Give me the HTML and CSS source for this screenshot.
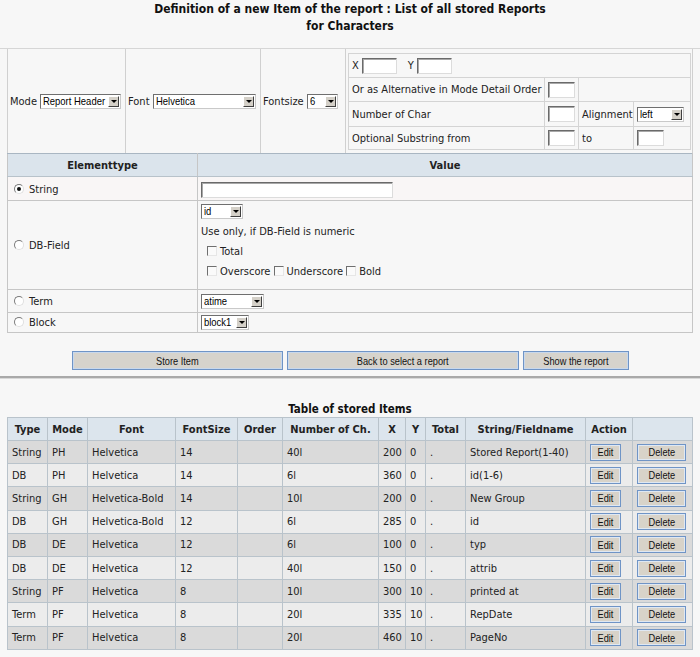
FILE: index.html
```html
<!DOCTYPE html>
<html>
<head>
<meta charset="utf-8">
<title>Definition of a new Item</title>
<link rel="stylesheet" href="styles.css">
</head>
<body>
<div class="title">Definition of a new Item of the report : List of all stored Reports<br>for Characters</div>

<table class="settings">
  <colgroup><col class="sc1"><col class="sc2"><col class="sc3"><col class="sc4"></colgroup>
  <tr>
    <td class="scell">Mode <span class="sel w-mode"><span class="st"><span class="nar">Report Header</span></span><span class="arr"></span></span></td>
    <td class="scell">Font <span class="sel w-font"><span class="st"><span class="nar">Helvetica</span></span><span class="arr"></span></span></td>
    <td class="scell">Fontsize <span class="sel w-size"><span class="st"><span class="nar">6</span></span><span class="arr"></span></span></td>
    <td class="nestcell">
      <table class="nest">
        <colgroup><col class="nc1"><col class="nc2"><col class="nc3"><col class="nc4"></colgroup>
        <tr class="nr1"><td colspan="4"><span class="lbl">X</span><span class="inp w-xy"></span><span class="lbl lbl-y">Y</span><span class="inp w-xy"></span></td></tr>
        <tr class="nr2"><td>Or as Alternative in Mode Detail Order</td><td><span class="inp w-small"></span></td><td colspan="2"></td></tr>
        <tr class="nr3"><td>Number of Char</td><td><span class="inp w-small"></span></td><td>Alignment</td><td><span class="sel w-align"><span class="st"><span class="nar">left</span></span><span class="arr"></span></span></td></tr>
        <tr class="nr4"><td>Optional Substring from</td><td><span class="inp w-small"></span></td><td>to</td><td><span class="inp w-small"></span></td></tr>
      </table>
    </td>
  </tr>
</table>

<table class="etable">
  <colgroup><col class="ec1"><col class="ec2"></colgroup>
  <tr class="ehead"><th>Elementtype</th><th>Value</th></tr>
  <tr class="er-string">
    <td><span class="radio on"></span>String</td>
    <td><span class="inp w-string"></span></td>
  </tr>
  <tr class="er-db">
    <td><span class="radio"></span>DB-Field</td>
    <td>
      <div class="dbsel"><span class="sel w-id"><span class="st"><span class="nar">id</span></span><span class="arr"></span></span></div>
      <div class="note">Use only, if DB-Field is numeric</div>
      <div class="cbline"><span class="cb"></span>Total</div>
      <div class="cbline"><span class="cb"></span>Overscore <span class="cb"></span>Underscore <span class="cb"></span>Bold</div>
    </td>
  </tr>
  <tr class="er-term">
    <td><span class="radio"></span>Term</td>
    <td><span class="sel w-atime"><span class="st"><span class="nar">atime</span></span><span class="arr"></span></span></td>
  </tr>
  <tr class="er-block">
    <td><span class="radio"></span>Block</td>
    <td><span class="sel w-block"><span class="st"><span class="nar">block1</span></span><span class="arr"></span></span></td>
  </tr>
</table>

<div class="btns">
  <button class="bigbtn w-store"><span class="narc">Store Item</span></button>
  <button class="bigbtn w-back"><span class="narc">Back to select a report</span></button>
  <button class="bigbtn w-show"><span class="narc">Show the report</span></button>
</div>

<div class="rule-thick"></div>

<div class="subtitle">Table of stored Items</div>

<table class="stored">
  <colgroup>
    <col class="t1"><col class="t2"><col class="t3"><col class="t4"><col class="t5"><col class="t6">
    <col class="t7"><col class="t8"><col class="t9"><col class="t10"><col class="t11"><col class="t12">
  </colgroup>
  <tr class="shead">
    <th>Type</th><th>Mode</th><th>Font</th><th>FontSize</th><th>Order</th><th>Number of Ch.</th>
    <th>X</th><th>Y</th><th>Total</th><th>String/Fieldname</th><th>Action</th><th></th>
  </tr>
  <tr class="odd"><td>String</td><td>PH</td><td>Helvetica</td><td>14</td><td></td><td>40l</td><td>200</td><td>0</td><td>.</td><td>Stored Report(1-40)</td><td class="act"><button class="sbtn edit"><span class="narc">Edit</span></button></td><td class="act"><button class="sbtn del"><span class="narc">Delete</span></button></td></tr>
  <tr class="even"><td>DB</td><td>PH</td><td>Helvetica</td><td>14</td><td></td><td>6l</td><td>360</td><td>0</td><td>.</td><td>id(1-6)</td><td class="act"><button class="sbtn edit"><span class="narc">Edit</span></button></td><td class="act"><button class="sbtn del"><span class="narc">Delete</span></button></td></tr>
  <tr class="odd"><td>String</td><td>GH</td><td>Helvetica-Bold</td><td>14</td><td></td><td>10l</td><td>200</td><td>0</td><td>.</td><td>New Group</td><td class="act"><button class="sbtn edit"><span class="narc">Edit</span></button></td><td class="act"><button class="sbtn del"><span class="narc">Delete</span></button></td></tr>
  <tr class="even"><td>DB</td><td>GH</td><td>Helvetica-Bold</td><td>12</td><td></td><td>6l</td><td>285</td><td>0</td><td>.</td><td>id</td><td class="act"><button class="sbtn edit"><span class="narc">Edit</span></button></td><td class="act"><button class="sbtn del"><span class="narc">Delete</span></button></td></tr>
  <tr class="odd"><td>DB</td><td>DE</td><td>Helvetica</td><td>12</td><td></td><td>6l</td><td>100</td><td>0</td><td>.</td><td>typ</td><td class="act"><button class="sbtn edit"><span class="narc">Edit</span></button></td><td class="act"><button class="sbtn del"><span class="narc">Delete</span></button></td></tr>
  <tr class="even"><td>DB</td><td>DE</td><td>Helvetica</td><td>12</td><td></td><td>40l</td><td>150</td><td>0</td><td>.</td><td>attrib</td><td class="act"><button class="sbtn edit"><span class="narc">Edit</span></button></td><td class="act"><button class="sbtn del"><span class="narc">Delete</span></button></td></tr>
  <tr class="odd"><td>String</td><td>PF</td><td>Helvetica</td><td>8</td><td></td><td>10l</td><td>300</td><td>10</td><td>.</td><td>printed at</td><td class="act"><button class="sbtn edit"><span class="narc">Edit</span></button></td><td class="act"><button class="sbtn del"><span class="narc">Delete</span></button></td></tr>
  <tr class="even"><td>Term</td><td>PF</td><td>Helvetica</td><td>8</td><td></td><td>20l</td><td>335</td><td>10</td><td>.</td><td>RepDate</td><td class="act"><button class="sbtn edit"><span class="narc">Edit</span></button></td><td class="act"><button class="sbtn del"><span class="narc">Delete</span></button></td></tr>
  <tr class="odd"><td>Term</td><td>PF</td><td>Helvetica</td><td>8</td><td></td><td>20l</td><td>460</td><td>10</td><td>.</td><td>PageNo</td><td class="act"><button class="sbtn edit"><span class="narc">Edit</span></button></td><td class="act"><button class="sbtn del"><span class="narc">Delete</span></button></td></tr>
</table>
</body>
</html>
```

FILE: styles.css
```css
html, body {
  margin: 0;
  padding: 0;
}
body {
  background: #f7f7f7;
  font-family: "DejaVu Sans Condensed", "DejaVu Sans", sans-serif;
  font-size: 11px;
  color: #222;
}

.title {
  height: 49px;
  box-sizing: border-box;
  padding-top: 1px;
  text-align: center;
  font-weight: bold;
  font-size: 12px;
  line-height: 17px;
  color: #111;
  border-bottom: 1px solid #d6d6d6;
}

/* narrow (Arial Narrow-like) text used by form controls */
.nar {
  display: inline-block;
  transform: scaleX(0.86);
  transform-origin: left center;
  white-space: nowrap;
}
.narc {
  display: inline-block;
  transform: scaleX(0.84);
  transform-origin: center center;
  white-space: nowrap;
}

/* ---------- generic controls ---------- */
.sel {
  display: inline-flex;
  vertical-align: middle;
  box-sizing: border-box;
  height: 15px;
  background: #fff;
  border: 1px solid;
  border-color: #6f6f6f #c9c9c9 #c9c9c9 #6f6f6f;
  font-family: "Liberation Sans", Arial, sans-serif;
  font-size: 11px;
  line-height: 13px;
  color: #000;
}
.sel .st {
  flex: 1;
  padding-left: 2px;
  overflow: hidden;
  white-space: nowrap;
}
.sel .arr {
  position: relative;
  width: 11px;
  margin: 1px;
  box-sizing: border-box;
  background: #d4d0c8;
  border: 1px solid;
  border-color: #fff #404040 #404040 #fff;
}
.sel .arr::after {
  content: "";
  position: absolute;
  left: 2px;
  top: 3px;
  border-left: 3px solid transparent;
  border-right: 3px solid transparent;
  border-top: 3px solid #000;
}
.w-mode { width: 81px; }
.w-font { width: 103px; }
.w-size { width: 31px; }
.w-align { width: 47px; }
.w-id { width: 42px; }
.w-atime { width: 63px; }
.w-block { width: 48px; }

.inp {
  display: inline-block;
  vertical-align: middle;
  box-sizing: border-box;
  height: 16px;
  background: #fff;
  border: 1px solid;
  border-color: #6a6a6a #dcdcdc #dcdcdc #6a6a6a;
  box-shadow: inset 1px 1px 0 #a8a8a8;
}
.w-xy { width: 35px; }
.w-small { width: 27px; }
.w-string { width: 192px; }

.radio {
  display: inline-block;
  vertical-align: -1px;
  box-sizing: border-box;
  width: 10px;
  height: 10px;
  margin: 0 5px 0 4px;
  border-radius: 50%;
  background: #fff;
  border: 1px solid;
  border-color: #7a7a7a #e0e0e0 #e0e0e0 #7a7a7a;
  position: relative;
}
.radio.on::after {
  content: "";
  position: absolute;
  left: 2px;
  top: 2px;
  width: 4px;
  height: 4px;
  border-radius: 50%;
  background: #111;
}

.cb {
  display: inline-block;
  vertical-align: -1px;
  box-sizing: border-box;
  width: 10px;
  height: 10px;
  margin-right: 3px;
  background: #fafafa;
  border: 1px solid;
  border-color: #6f6f6f #e6e6e6 #e6e6e6 #6f6f6f;
}

/* ---------- settings row ---------- */
.settings {
  margin-left: 7px;
  width: 685px;
  border-collapse: collapse;
  table-layout: fixed;
}
.sc1 { width: 118px; }
.sc2 { width: 135px; }
.sc3 { width: 85px; }
.sc4 { width: 347px; }
.scell {
  height: 103px;
  padding: 1px 0 0 2px;
  border-left: 1px solid #d0d0d0;
  border-right: 1px solid #d0d0d0;
  vertical-align: middle;
  white-space: nowrap;
}
.nestcell {
  padding: 4px 3px 2px 2px;
  border-left: 1px solid #d0d0d0;
  border-right: 1px solid #d0d0d0;
  vertical-align: top;
}
.nest {
  width: 342px;
  border-collapse: collapse;
  table-layout: fixed;
  border: 1px solid #d4d4d4;
}
.nc1 { width: 196px; }
.nc2 { width: 34px; }
.nc3 { width: 55px; }
.nc4 { width: 57px; }
.nest td {
  border: 1px solid #d4d4d4;
  padding: 0 0 0 3px;
  white-space: nowrap;
  vertical-align: middle;
}
.nr1 td { height: 23px; }
.nr2 td { height: 23px; }
.nr3 td { height: 24px; }
.nr4 td { height: 22px; }
.lbl { margin-right: 3px; }
.lbl-y { margin-left: 11px; }

/* ---------- element type table ---------- */
.etable {
  margin-left: 7px;
  width: 685px;
  border-collapse: collapse;
  table-layout: fixed;
}
.ec1 { width: 190px; }
.ec2 { width: 495px; }
.etable th, .etable td {
  border: 1px solid #c6c6c6;
  text-align: left;
}
.ehead th {
  height: 22px;
  padding: 0;
  background: #dbe4ec;
  border-top: 1px solid #a9b6c2;
  border-bottom: 1px solid #b8c2ca;
  text-align: center;
  font-weight: bold;
}
.etable td {
  padding: 0 0 0 2px;
  vertical-align: middle;
}
.etable td:last-child { padding-left: 3px; }
.er-string td { height: 21px; background: #f9f6f6; padding-top: 2px; }
.er-db td { height: 88px; }
.er-term td { height: 22px; }
.er-block td { height: 19px; }
.er-db td:last-child { vertical-align: top; }
.dbsel { margin-top: 3px; height: 15px; }
.note { margin-top: 6px; line-height: 14px; }
.cbline {
  margin-top: 6px;
  padding-left: 6px;
  line-height: 14px;
  white-space: nowrap;
}

/* ---------- buttons ---------- */
.btns {
  display: flex;
  justify-content: center;
  gap: 4px;
  padding-top: 18px;
  margin-left: 1px;
}
.bigbtn {
  height: 19px;
  padding: 0;
  background: #d6d3cc;
  border: 1px solid #6f94c6;
  box-shadow: inset 0 0 0 1px #c8d8ec;
  font-family: "Liberation Sans", Arial, sans-serif;
  font-size: 11px;
  color: #111;
}
.w-store { width: 211px; }
.w-back { width: 232px; }
.w-show { width: 106px; }

.rule-thick {
  margin-top: 6px;
  height: 2px;
  background: #a9a9a9;
  border-bottom: 1px solid #d8d8d8;
}

.subtitle {
  margin-top: 23px;
  text-align: center;
  font-weight: bold;
  font-size: 11.5px;
  line-height: 15px;
  color: #111;
}

/* ---------- stored items table ---------- */
.stored {
  margin-left: 7px;
  width: 685px;
  border-collapse: collapse;
  table-layout: fixed;
}
.t1 { width: 40px; }
.t2 { width: 40px; }
.t3 { width: 88px; }
.t4 { width: 62px; }
.t5 { width: 45px; }
.t6 { width: 96px; }
.t7 { width: 27px; }
.t8 { width: 20px; }
.t9 { width: 40px; }
.t10 { width: 120px; }
.t11 { width: 47px; }
.t12 { width: 60px; }
.stored th, .stored td {
  border: 1px solid #b9c3cb;
  white-space: nowrap;
  overflow: hidden;
}
.shead th {
  height: 22px;
  padding: 0;
  background: #dce5ed;
  font-weight: bold;
  text-align: center;
}
.stored td {
  height: 22.2px;
  padding: 0 0 0 4px;
  text-align: left;
  vertical-align: middle;
}
.stored tr.odd td { background: #dadada; }
.stored tr.even td { background: #ececec; }
.stored td.act { padding: 0 0 0 4px; }
.sbtn {
  height: 17px;
  padding: 0;
  background: #d8d3c9;
  border: 1px solid #6f94c6;
  box-shadow: inset 0 0 0 1px #dfe8f3;
  font-family: "Liberation Sans", Arial, sans-serif;
  font-size: 11px;
  color: #111;
}
.sbtn.edit { width: 31px; }
.sbtn.del { width: 49px; }
```
